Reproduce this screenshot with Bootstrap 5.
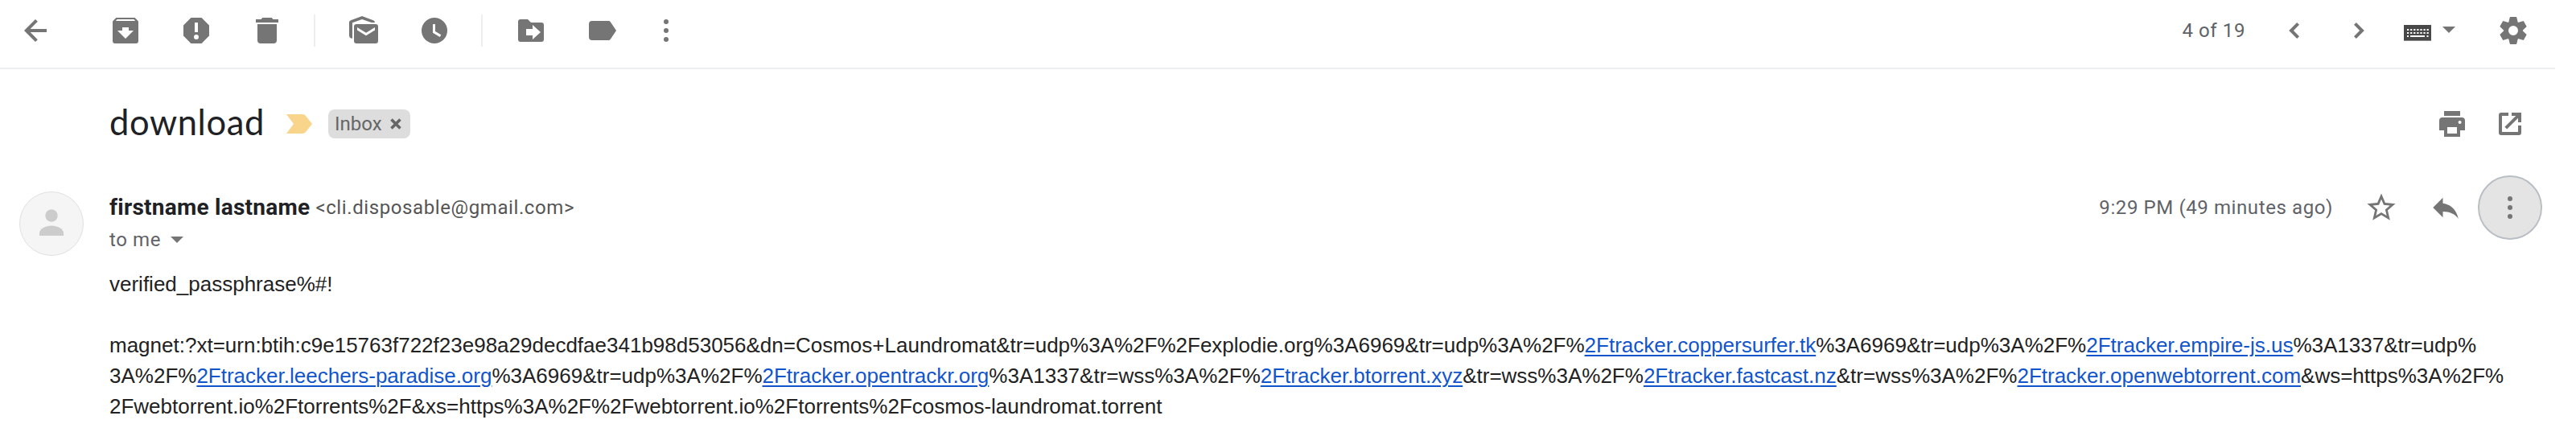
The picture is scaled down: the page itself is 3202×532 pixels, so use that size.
<!DOCTYPE html>
<html lang="en">
<head>
<meta charset="utf-8">
<title>download</title>
<link href="https://cdn.jsdelivr.net/npm/bootstrap@5.3.0/dist/css/bootstrap.min.css" rel="stylesheet">
<style>
body{background:#fff;font-family:Roboto,sans-serif;color:#222;width:3202px;height:532px;overflow:hidden}
svg{display:block;flex:none;fill:#757575}
.ico{width:40px;height:40px}
.toolbar{height:86px;padding:0 32px 8px 24px;margin-right:26px;border-bottom:2px solid #eceff1}
.tool-set{gap:48px}
.tool-set.first{margin-left:72px}
.overflow-dots{margin-left:-8px}
.rule{width:2px;height:40px;background:#eceff1;margin:0 40px 0 38px}
.meta{font-size:24px;line-height:32px;letter-spacing:.6px;color:#5f6368;white-space:nowrap}
.count{margin-right:41px}
.next{margin-left:40px}
.keyboard{margin:6px 14px 0 36px}
.keyboard-caret{margin:0 52px 2px 0}
.subject{height:40px;margin:48px 62px 0 136px}
.subject h1{width:194px;font:400 43.5px/34px Lato,sans-serif;letter-spacing:.6px;color:#202124;white-space:nowrap}
.important{margin:0 20px 0 26px}
.tag{width:102px;height:36px;border-radius:8px;background:#ddd;color:#666;font-size:24px;line-height:36px;padding-left:8px}
.tag svg{margin-left:9px}
.page-tools{gap:32px}
.sender{height:80px;margin:44px 42px 0 24px}
.avatar{width:80px;height:80px;margin-top:20px}
.names{margin:20px 0 0 32px}
.who{font-size:28px;line-height:40px;letter-spacing:.25px;color:#202124}
.who .meta{line-height:40px;color:#555;margin-left:7px}
.recipient{margin-top:4px}
.recipient svg{margin-left:12px}
.when{margin-right:39px}
.reply{margin:0 19px 0 38px}
.more{width:80px;height:80px;border:2px solid #babfc5;background:#e4e4e4}
.message{margin:36px 0 0 136px;font:26px/38px "Liberation Sans",Arial,sans-serif;white-space:nowrap}
.message a{color:#15c;text-decoration:underline;text-decoration-thickness:2px;text-underline-offset:3px}
</style>
</head>
<body>
<header class="toolbar d-flex align-items-center">
  <svg class="ico" viewBox="0 0 20 20"><path d="M17 10H4.6M10.7 3.7L4.4 10l6.3 6.3" fill="none" stroke="#757575" stroke-width="2"/></svg>
  <div class="tool-set first d-flex">
    <svg class="ico" viewBox="0 0 20 20"><path fill-rule="evenodd" d="M4.2 2h11.6L18 4.3v12.2a1.5 1.5 0 0 1-1.5 1.5h-13A1.5 1.5 0 0 1 2 16.500V4.300zM4.800 3l-.9 1h12.200l-.9-1zM10 15l5-5h-3V8H8v2H5z"/></svg>
    <svg class="ico" viewBox="0 0 20 20"><path fill-rule="evenodd" d="M6.700 2h6.600L18 6.700v6.600L13.300 18H6.700L2 13.300V6.700zM9 5v6h2V5zM10 12.500a1.500 1.500 0 1 0 0 3a1.500 1.500 0 0 0 0-3z"/></svg>
    <svg class="ico" viewBox="0 0 20 20"><path d="M3 3h3.200l1-1h5.600l1 1H17v2H3zM4 6h12v10a2 2 0 0 1-2 2H6a2 2 0 0 1-2-2z"/></svg>
  </div>
  <div class="rule"></div>
  <div class="tool-set d-flex">
    <svg class="ico" viewBox="0 0 20 20"><path fill-rule="evenodd" d="M3 14.900C1.700 14.900 1 14 1 13V4.800Q1 4 2 3.600L9 1l7 2.600q1 .4 1 1.400h-2.200L9 3 3 5.100zM5.500 6h12A1.500 1.500 0 0 1 19 7.500v9a1.500 1.500 0 0 1-1.500 1.500h-12A1.500 1.500 0 0 1 4 16.500v-9A1.500 1.500 0 0 1 5.500 6zM6 8v1.700l5.500 3.400L17 9.700V8l-5.500 3.400z"/></svg>
    <svg class="ico" viewBox="0 0 20 20"><circle cx="10" cy="10" r="8"/><path d="M9.750 6v4.900l4 2.400" fill="none" stroke="#fff" stroke-width="1.5"/></svg>
  </div>
  <div class="rule"></div>
  <div class="tool-set d-flex">
    <svg class="ico" viewBox="0 0 20 20"><path fill-rule="evenodd" d="M3.500 3H8l2 2h6.500A1.500 1.500 0 0 1 18 6.500v9a1.500 1.500 0 0 1-1.500 1.500h-13A1.500 1.500 0 0 1 2 15.500v-11A1.500 1.500 0 0 1 3.500 3zM7 9v4h4v2.500l5-4.500-5-4.500V9z"/></svg>
    <svg class="ico" viewBox="0 0 20 20"><path d="M4 4h10.200q.8 0 1.200.6L19 10l-3.600 5.400q-.4.600-1.200.6H4a2 2 0 0 1-2-2V6a2 2 0 0 1 2-2z"/></svg>
    <svg class="ico overflow-dots" viewBox="0 0 20 20"><circle cx="10" cy="4.500" r="1.500"/><circle cx="10" cy="10" r="1.500"/><circle cx="10" cy="15.500" r="1.500"/></svg>
  </div>
  <div class="d-flex align-items-center ms-auto">
    <span class="meta count">4 of 19</span>
    <svg class="ico" viewBox="0 0 20 20"><path d="M12.300 5.700L8 10l4.300 4.300" fill="none" stroke="#757575" stroke-width="2"/></svg>
    <svg class="ico next" viewBox="0 0 20 20"><path d="M7.700 5.700L12 10l-4.300 4.300" fill="none" stroke="#757575" stroke-width="2"/></svg>
    <svg class="keyboard" width="34" height="20" viewBox="0 0 34 20"><path fill="#484848" d="M0 0h34v20H0z"/><path fill="#888" d="M0 19h34v1H0z"/><path d="M4 6h27M4 10h27" stroke="#fff" stroke-width="2" stroke-dasharray="2.200 1.900"/><path fill="#fff" d="M4 13h2v2H4zM8 13h18v2H8zM28.500 13h2v2h-2z"/></svg>
    <svg class="keyboard-caret" width="16" height="8" viewBox="0 0 16 8"><path d="M0 0h16L8 8z"/></svg>
    <svg class="ico" viewBox="-20 -20 40 40"><circle r="9" fill="none" stroke="#757575" stroke-width="6"/><path id="teeth" d="M-4.300-16.200Q-4.200-17-3.400-17h6.800q.8 0 .9.800L5.700-10.200h-11.400zM-4.300 16.200Q-4.200 17-3.400 17h6.800q.8 0 .9-.8L5.700 10.200h-11.400z"/><use href="#teeth" transform="rotate(60)"/><use href="#teeth" transform="rotate(120)"/></svg>
  </div>
</header>
<main>
  <div class="subject d-flex align-items-center">
    <h1 class="m-0 align-self-start">download</h1>
    <svg class="important" width="32" height="24" viewBox="0 0 32 24"><path fill="#f9d58b" d="M0 0h20q2.500 0 4 2l8 10-8 10q-1.500 2-4 2H0l9-12z"/></svg>
    <span class="tag d-flex align-items-center"><span>Inbox</span><svg width="16" height="16" viewBox="0 0 16 16"><path d="M2.500 2.500l11 11M13.500 2.500l-11 11" stroke="#666" stroke-width="3.600"/></svg></span>
    <div class="page-tools d-flex ms-auto">
      <svg class="ico" viewBox="0 0 20 20"><path fill-rule="evenodd" d="M5 2h10v3H5zM4 6h12a2 2 0 0 1 2 2v6h-3v4H5v-4H2V8a2 2 0 0 1 2-2zM7 12v4h6v-4zM14.800 8a1 1 0 1 0 0 2a1 1 0 0 0 0-2z"/></svg>
      <svg class="ico" viewBox="0 0 20 20"><path d="M9 3v2H5v10h10v-4h2v4.500a1.500 1.500 0 0 1-1.500 1.500h-11A1.500 1.500 0 0 1 3 15.500v-11A1.500 1.500 0 0 1 4.500 3zM11 3h6v6h-2V6.400l-6.900 6.900-1.400-1.400L13.600 5H11z"/></svg>
    </div>
  </div>
  <div class="sender d-flex align-items-start">
    <svg class="avatar" viewBox="0 0 80 80"><circle cx="40" cy="40" r="39.500" fill="#f5f5f5" stroke="#e0e0e0"/><circle cx="40" cy="30" r="7.700" fill="#ccc"/><path fill="#ccc" d="M25 55v-3c0-6 8-9.500 15-9.500s15 3.500 15 9.500v3z"/></svg>
    <div class="names">
      <div class="who d-flex align-items-start"><b>firstname lastname</b><span class="meta">&lt;cli.disposable@gmail.com&gt;</span></div>
      <div class="meta recipient d-flex align-items-center"><span>to me</span><svg width="16" height="8" viewBox="0 0 16 8"><path d="M0 0h16L8 8z"/></svg></div>
    </div>
    <div class="d-flex align-items-center ms-auto">
      <span class="meta when">9:29 PM (49 minutes ago)</span>
      <svg width="42" height="42" viewBox="0 0 24 24"><path d="M22 9.240l-7.190-.62L12 2 9.190 8.630 2 9.240l5.460 4.730L5.820 21 12 17.270 18.180 21l-1.630-7.030zM12 15.400l-3.760 2.270 1-4.280-3.320-2.880 4.380-.38L12 6.100l1.710 4.040 4.380.38-3.320 2.880 1 4.280z"/></svg>
      <svg class="reply" width="42" height="42" viewBox="0 0 24 24"><path d="M10 9V5l-7 7 7 7v-4.100c5 0 8.500 1.600 11 5.100-1-5-4-10-11-11z"/></svg>
      <div class="more rounded-circle d-flex align-items-center justify-content-center"><svg class="ico" viewBox="0 0 20 20"><circle cx="10" cy="4.500" r="1.500"/><circle cx="10" cy="10" r="1.500"/><circle cx="10" cy="15.500" r="1.500"/></svg></div>
    </div>
  </div>
  <div class="message">
    <div>verified_passphrase%#!</div>
    <br>
    <div>magnet:?xt=urn:btih:c9e15763f722f23e98a29decdfae341b98d53056&amp;dn=Cosmos+Laundromat&amp;tr=udp%3A%2F%2Fexplodie.org%3A6969&amp;tr=udp%3A%2F%<a href="#">2Ftracker.coppersurfer.tk</a>%3A6969&amp;tr=udp%3A%2F%<a href="#">2Ftracker.empire-js.us</a>%3A1337&amp;tr=udp%</div>
    <div>3A%2F%<a href="#">2Ftracker.leechers-paradise.org</a>%3A6969&amp;tr=udp%3A%2F%<a href="#">2Ftracker.opentrackr.org</a>%3A1337&amp;tr=wss%3A%2F%<a href="#">2Ftracker.btorrent.xyz</a>&amp;tr=wss%3A%2F%<a href="#">2Ftracker.fastcast.nz</a>&amp;tr=wss%3A%2F%<a href="#">2Ftracker.openwebtorrent.com</a>&amp;ws=https%3A%2F%</div>
    <div>2Fwebtorrent.io%2Ftorrents%2F&amp;xs=https%3A%2F%2Fwebtorrent.io%2Ftorrents%2Fcosmos-laundromat.torrent</div>
  </div>
</main>
<script src="https://cdn.jsdelivr.net/npm/bootstrap@5.3.0/dist/js/bootstrap.bundle.min.js"></script>
</body>
</html>
